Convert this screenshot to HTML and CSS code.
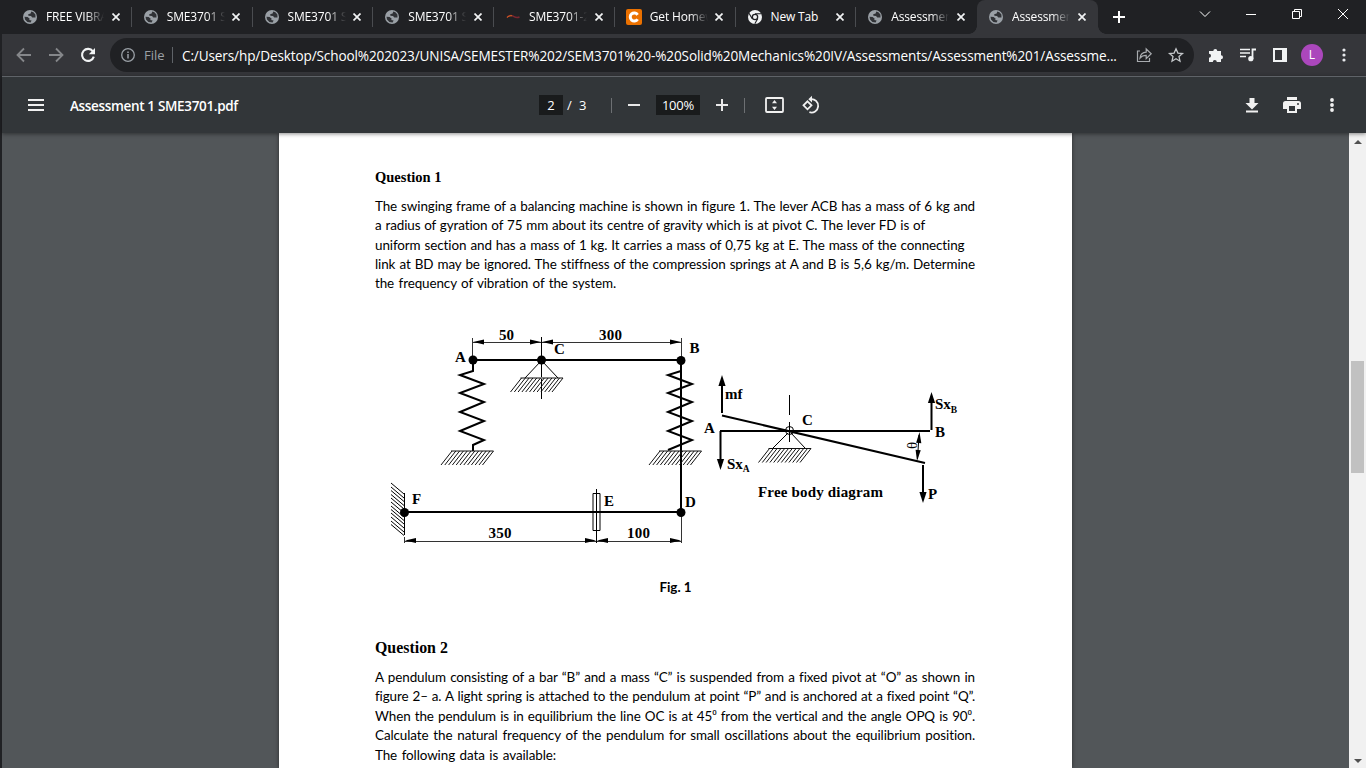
FILE: index.html
```
<!DOCTYPE html>
<html lang="en">
<head>
<meta charset="utf-8">
<title>Assessment 1 SME3701.pdf</title>
<link rel="stylesheet" href="styles.css">
</head>
<body>
<svg class="defs">
<defs>
<symbol id="globe" viewBox="0 0 14 14"><circle cx="7" cy="7" r="7" fill="#9aa0a6"/><path d="M8.3 1.5L7.6 3.6 5.2 4.2 5.4 5.8 8 6.1 9.3 7.6 12.5 7.4 12.4 4.6 10.4 2.2zM1.5 6.8L4.6 7 6.7 8.8 6.2 10 8.6 10.4 7.6 12.5 4.4 11.9 2 9.5z" fill="#303236"/></symbol>
<symbol id="x" viewBox="0 0 8 8"><path d="M.5.5l7 7M7.5.5l-7 7" stroke="#f1f3f4" stroke-width="1.7"/></symbol>
<g id="hatch" stroke="#111" stroke-width="1"><path d="M0 0H42.5M1 0l-11 14M4.8 0l-11 14M8.6 0l-11 14M12.4 0l-11 14M16.2 0l-11 14M20 0l-11 14M23.8 0l-11 14M27.6 0l-11 14M31.4 0l-11 14M35.2 0l-11 14M39 0l-11 14M42.5 0l-11 14"/></g>
<path id="head" d="M0 0L-11 -2.6V2.6z"/>
<path id="bighead" d="M0 0L-3.6 11H3.6z"/>
</defs>
</svg>

<div class="tabstrip">
<div class="tab"><svg class="fav"><use href="#globe"/></svg><span class="name">FREE VIBRATION</span><svg class="close"><use href="#x"/></svg></div>
<div class="tab"><svg class="fav"><use href="#globe"/></svg><span class="name">SME3701 Solid</span><svg class="close"><use href="#x"/></svg></div>
<div class="tab"><svg class="fav"><use href="#globe"/></svg><span class="name">SME3701 Solid</span><svg class="close"><use href="#x"/></svg></div>
<div class="tab"><svg class="fav"><use href="#globe"/></svg><span class="name">SME3701 Solid</span><svg class="close"><use href="#x"/></svg></div>
<div class="tab"><svg class="fav" viewBox="0 0 14 14"><path d="M1 7.5C3 5 6 5.400 8 6.600S12 7.600 13.500 7" fill="none" stroke="#7a2630" stroke-width="1.4"/><path d="M1 7.500C2.500 5.800 4 5.400 6 5.800" fill="none" stroke="#d8641e" stroke-width="1.1"/></svg><span class="name">SME3701-23</span><svg class="close"><use href="#x"/></svg></div>
<div class="tab"><svg class="fav wide" viewBox="0 0 16 16"><rect width="16" height="16" rx="2" fill="#eb7100"/><path d="M11.600 5.800A4 4 0 1 0 11.600 10.200" fill="none" stroke="#fff" stroke-width="3"/></svg><span class="name">Get Homework</span><svg class="close"><use href="#x"/></svg></div>
<div class="tab"><svg class="fav" viewBox="0 0 14 14"><circle cx="7" cy="7" r="7" fill="#f1f3f4"/><path d="M7 3.8H13.3M4.2 8.6L1 3.2M9.8 8.6L6.8 13.8" stroke="#202124" stroke-width="1.1"/><circle cx="7" cy="7" r="3.3" fill="#202124"/><circle cx="7" cy="7" r="2" fill="#f1f3f4"/></svg><span class="name short">New Tab</span><svg class="close"><use href="#x"/></svg></div>
<div class="tab last"><svg class="fav"><use href="#globe"/></svg><span class="name">Assessment 1</span><svg class="close"><use href="#x"/></svg></div>
<div class="tab active"><svg class="fav"><use href="#globe"/></svg><span class="name">Assessment 1</span><svg class="close"><use href="#x"/></svg></div>
<svg class="newtab" viewBox="0 0 12 12"><path d="M6 0v12M0 6h12" stroke="#fff" stroke-width="2"/></svg>
<div class="winbtns">
<svg viewBox="0 0 46 28"><path d="M18 11.5l5 5 5-5"/></svg>
<svg viewBox="0 0 46 28"><path d="M18 14.5h10"/></svg>
<svg viewBox="0 0 46 28"><path d="M18.5 11.5h7v7h-7zM20.5 11.5v-2h7v7h-2"/></svg>
<svg viewBox="0 0 46 28"><path d="M18 9l10 10M28 9L18 19"/></svg>
</div>
</div>

<div class="window">
<div class="toolbar">
<svg class="tool" viewBox="0 0 32 32"><path d="M23 16H10M16 9.5L9.5 16l6.5 6.5" fill="none" stroke="#85878a" stroke-width="1.8"/></svg>
<svg class="tool" viewBox="0 0 32 32"><path d="M9 16h13M16 9.5l6.5 6.5-6.5 6.5" fill="none" stroke="#85878a" stroke-width="1.8"/></svg>
<svg class="tool" viewBox="0 0 32 32"><path d="M20.900 12.300A6 6 0 1 0 21.800 17.600" fill="none" stroke="#f1f3f4" stroke-width="2.100"/><path d="M23 9v6.200h-6.200z" fill="#f1f3f4"/></svg>
<div class="omnibox">
<svg class="info" viewBox="0 0 14 14"><circle cx="7" cy="7" r="6.3" fill="none" stroke="#9aa0a6" stroke-width="1.3"/><path d="M7 6v4.500M7 3.500v1.400" stroke="#9aa0a6" stroke-width="1.500"/></svg>
<span class="scheme">File</span>
<span class="url">C:/Users/hp/Desktop/School%202023/UNISA/SEMESTER%202/SEM3701%20-%20Solid%20Mechanics%20IV/Assessments/Assessment%201/Assessme...</span>
<svg class="tool" viewBox="0 0 32 32"><path d="M12 12H9.500v10.500h12V19" fill="none" stroke="#a8abaf" stroke-width="1.200"/><path d="M12 19c.5-4 3-5.700 6.200-5.800V10l5 4.800-5 4.800v-3.200c-2.800 0-4.600.7-6.200 2.600z" fill="none" stroke="#a8abaf" stroke-width="1.200"/></svg>
<svg class="tool" viewBox="0 0 32 32"><path d="M16 9.800l1.900 4.300 4.600.4-3.500 3.100 1 4.600-4-2.400-4 2.400 1-4.600-3.500-3.100 4.600-.4z" fill="none" stroke="#c4c7ca" stroke-width="1.300"/></svg>
</div>
<svg class="tool" viewBox="0 0 32 32"><path d="M9 12h4.300a2 2 0 1 1 4 0H21v4.200a2 2 0 1 1 0 4V23h-4.200a2 2 0 0 0-4 0H9v-4.200a2 2 0 0 0 0-4z" fill="#f1f3f4"/></svg>
<svg class="tool" viewBox="0 0 32 32"><path d="M8 10.500h10M8 14h10M8 17.500h6" stroke="#f1f3f4" stroke-width="1.500"/><path d="M20.500 20V10.500H24" fill="none" stroke="#f1f3f4" stroke-width="1.800"/><circle cx="18.800" cy="19.700" r="2.600" fill="#f1f3f4"/></svg>
<svg class="tool" viewBox="0 0 32 32"><path d="M10 10h12v12H10z" fill="none" stroke="#f1f3f4" stroke-width="2"/><path d="M18 9h5v14h-5z" fill="#f1f3f4"/></svg>
<div class="avatar">L</div>
<svg class="tool" viewBox="0 0 32 32" fill="#e8eaed"><circle cx="16" cy="11" r="1.600"/><circle cx="16" cy="16" r="1.600"/><circle cx="16" cy="21" r="1.600"/></svg>
</div>

<div class="pdfbar">
<div class="pdfleft">
<svg class="menu" viewBox="0 0 16 12"><path d="M0 1h16M0 6h16M0 11h16" stroke="#f1f1f1" stroke-width="2"/></svg>
<span class="filename">Assessment 1 SME3701.pdf</span>
</div>
<div class="pdfmid">
<span class="box num">2</span><span class="total">/&nbsp; 3</span>
<span class="sep"></span>
<svg class="sign" viewBox="0 0 14 14"><path d="M1 7h12" stroke="#e8e8e8" stroke-width="2"/></svg>
<span class="box pct">100%</span>
<svg class="sign" viewBox="0 0 14 14"><path d="M1 7h12M7 1v12" stroke="#e8e8e8" stroke-width="2"/></svg>
<span class="sep"></span>
<svg class="fit" viewBox="0 0 19 16"><rect x="1" y="1" width="17" height="14" rx="1" fill="none" stroke="#f1f1f1" stroke-width="1.800"/><path d="M9.500 3L12 6.200H7zM9.500 13L12 9.800H7z" fill="#f1f1f1"/></svg>
<svg class="rotate" viewBox="0 0 20 20"><path d="M6.500 6.300L10.500 10.300 6.500 14.300 2.500 10.300z" fill="none" stroke="#f1f1f1" stroke-width="1.800"/><path d="M9.500 4.200A6.700 6.700 0 1 1 8.400 17.200" fill="none" stroke="#f1f1f1" stroke-width="1.800"/><path d="M11 .8v6.800L7.300 4.200z" fill="#f1f1f1"/></svg>
</div>
<div class="pdfright">
<svg viewBox="0 0 40 24"><path d="M17.500 5h5v5h4l-6.500 6.500-6.500-6.500h4zM14 17.500h12v2H14z" fill="#f1f1f1"/></svg>
<svg viewBox="0 0 40 24"><path d="M15 4h10v3H15zM13.500 8h13a2.500 2.500 0 0 1 2.500 2.500V16h-4v4H15v-4h-4v-5.500A2.500 2.500 0 0 1 13.500 8zM17 13v5h6v-5z" fill="#f1f1f1" fill-rule="evenodd"/><circle cx="26" cy="11" r="1" fill="#323639"/></svg>
<svg viewBox="0 0 40 24" fill="#f1f1f1"><circle cx="20" cy="7" r="1.900"/><circle cx="20" cy="12" r="1.900"/><circle cx="20" cy="17" r="1.900"/></svg>
</div>
</div>

<div class="viewer">
<div class="page">
<h2 class="q1">Question 1</h2>
<div class="para first">
<p>The swinging frame of a balancing machine is shown in figure 1. The lever ACB has a mass of 6 kg and</p>
<p class="w550">a radius of gyration of 75 mm about its centre of gravity which is at pivot C. The lever FD is of</p>
<p class="w590">uniform section and has a mass of 1 kg. It carries a mass of 0,75 kg at E. The mass of the connecting</p>
<p>link at BD may be ignored. The stiffness of the compression springs at A and B is 5,6 kg/m. Determine</p>
<p class="w241">the frequency of vibration of the system.</p>
</div>

<svg class="figure" viewBox="375 320 600 235" fill="none" stroke="#000" stroke-width="1">
<!-- balancing machine -->
<path d="M473 342.500H681M472.500 338V360M681.500 338V360M404 541.500H681M404.500 537V543M681.500 513V543" stroke="#333"/>
<path d="M541.500 337V399" stroke-dasharray="21 3 16 2"/>
<path d="M541 361L525 378M542 361L558 378"/>
<path d="M473 360H681M404 512H681M681 360V512" stroke-width="2"/>
<path d="M473 362V371L460 375 484 384 460 393 484 402 460 412 484 421 460 431 484 440 473 445V451M681 371L668 375 692 384 668 393 692 402 668 412 692 421 668 431 692 440 668 450" stroke-width="2"/>
<path d="M593 493.500h7v37h-7zM596.500 489V543"/>
<path d="M404.500 493V535M391 483l13 11M391 487l13 11M391 490.500l13 11M391 494.500l13 11M391 498l13 11M391 502l13 11M391 506l13 11M391 509.500l13 11M391 513l13 11M391 517l13 11M391 521l13 11M391 524.500l13 11"/>
<use href="#hatch" x="451" y="451"/>
<use href="#hatch" x="520.500" y="378"/>
<use href="#hatch" x="659" y="451"/>
<use href="#hatch" x="768.500" y="448.500"/>
<g fill="#000" stroke="none">
<circle cx="473" cy="360" r="4.500"/><circle cx="541.500" cy="360" r="4.500"/><circle cx="681" cy="360.500" r="4.500"/><circle cx="404.500" cy="512.500" r="4.500"/><circle cx="681" cy="512.500" r="4.500"/>
<use href="#head" transform="translate(541 342)"/><use href="#head" transform="translate(681 342)"/>
<use href="#head" transform="translate(473 342) rotate(180)"/><use href="#head" transform="translate(542 342) rotate(180)"/>
<use href="#head" transform="translate(596 540.500)"/><use href="#head" transform="translate(681 540.500)"/>
<use href="#head" transform="translate(405 540.500) rotate(180)"/><use href="#head" transform="translate(597 540.500) rotate(180)"/>
</g>
<!-- free body diagram -->
<path d="M720 431H930M722 415.500L925 463M722 413V382M720.500 431V462M931.500 430V400M923 465V495" stroke-width="2"/>
<path d="M789.500 395V415M789.500 422V442M788 433L773 448M791 433L805 448M919 435L917.500 459"/>
<circle cx="789.500" cy="430.500" r="4"/>
<g fill="#000" stroke="none">
<use href="#bighead" x="722" y="375"/><use href="#bighead" x="931.500" y="392"/>
<use href="#bighead" transform="translate(720.500 470) rotate(180)"/><use href="#bighead" transform="translate(923 503) rotate(180)"/>
<use href="#head" transform="translate(919.500 432) rotate(-86)"/><use href="#head" transform="translate(917 461) rotate(96)"/>
</g>
<g class="labels">
<text x="499" y="340">50</text><text x="599" y="340" textLength="23">300</text>
<text x="455" y="362">A</text><text x="554" y="354">C</text><text x="689.500" y="353">B</text>
<text x="412" y="504">F</text><text x="604" y="506">E</text><text x="685" y="507">D</text>
<text x="488.500" y="538" textLength="23">350</text><text x="627" y="538" textLength="23">100</text>
<text x="725" y="399">mf</text><text x="704" y="433">A</text><text x="802" y="425">C</text>
<text x="727" y="469">Sx<tspan class="sub" dy="3">A</tspan></text>
<text x="935" y="409">Sx<tspan class="sub" dy="4">B</tspan></text>
<text x="935" y="437">B</text><text x="928" y="499">P</text>
<text x="758" y="497" textLength="125">Free body diagram</text>
<text class="theta" transform="translate(917 449) rotate(-90)">θ</text>
</g>
</svg>

<p class="caption">Fig. 1</p>
<h2 class="q2">Question 2</h2>
<div class="para">
<p>A pendulum consisting of a bar “B” and a mass “C” is suspended from a fixed pivot at “O” as shown in</p>
<p>figure 2– a. A light spring is attached to the pendulum at point “P” and is anchored at a fixed point “Q”.</p>
<p>When the pendulum is in equilibrium the line OC is at 45⁰ from the vertical and the angle OPQ is 90⁰.</p>
<p>Calculate the natural frequency of the pendulum for small oscillations about the equilibrium position.</p>
<p class="w181">The following data is available:</p>
</div>
</div>
<div class="scrollbar">
<svg viewBox="0 0 8 4"><path d="M0 4L4 0l4 4z"/></svg>
<div class="thumb"></div>
<svg viewBox="0 0 8 4"><path d="M0 0l4 4 4-4z"/></svg>
</div>
</div>
</div>
</body>
</html>
```
FILE: styles.css
```
*{box-sizing:border-box}
body{margin:0;width:1366px;height:768px;overflow:hidden;background:#202124;color:#fff;font-family:"Open Sans","Noto Sans",sans-serif}
svg{display:block;flex:none}
.defs{position:absolute;width:0;height:0}

/* tabs */
.tabstrip{display:flex;height:34px;padding-left:11px;background:#202124}
.tab{display:flex;align-items:center;width:120.75px;flex:none;padding-left:12px;position:relative}
.tab::after{content:"";position:absolute;right:0;top:7px;width:1px;height:20px;background:#4a4c50}
.tab.last::after,.tab.active::after{display:none}
.fav{width:14px;height:14px;margin-right:9px}
.fav.wide{width:16px;height:16px;margin:0 8px 0 -1px}
.name{width:58px;font-size:12px;letter-spacing:-.15px;line-height:16px;white-space:nowrap;overflow:hidden;-webkit-mask-image:linear-gradient(90deg,#000 68%,transparent);mask-image:linear-gradient(90deg,#000 68%,transparent)}
.name.short{-webkit-mask-image:none;mask-image:none}
.close{width:8px;height:8px;margin-left:7.500px}
.active{background:#35363a;border-radius:8px 8px 0 0}
.active::before{content:"";position:absolute;left:-8px;right:-8px;bottom:0;height:8px;background:radial-gradient(circle at 0 0,transparent 7.500px,#35363a 8px) left/8px 8px no-repeat,radial-gradient(circle at 100% 0,transparent 7.500px,#35363a 8px) right/8px 8px no-repeat}
.newtab{width:12px;height:12px;margin:11px 0 0 15.250px}
.winbtns{display:flex;margin-left:auto}
.winbtns svg{width:46px;height:28px;fill:none;stroke:#fff;stroke-width:1}

.window{height:734px;margin-left:2px;display:flex;flex-direction:column}
.toolbar{display:flex;align-items:center;height:42px;padding-left:6px;padding-right:6px;background:#35363a}
.tool{width:32px;height:32px}
.omnibox{display:flex;align-items:center;width:1084px;height:34px;margin:0 6px;padding:0 2px 0 11px;border-radius:17px;background:#202124;flex:none}
.info{width:14px;height:14px}
.scheme{width:29px;height:16px;margin-left:9px;line-height:16px;font-size:13px;color:#9aa0a6;border-right:1px solid #5f6368}
.url{flex:1;padding-left:9px;font-size:13.600px;letter-spacing:-.135px;white-space:nowrap}
.avatar{width:22px;height:22px;margin:0 5px;border-radius:50%;background:#ab47bc;font-size:12px;line-height:22px;text-align:center}

/* pdf controls */
.pdfbar{display:flex;align-items:center;justify-content:space-between;height:57px;border-top:1px solid #5f6368;background:#323639;box-shadow:0 1px 4px rgba(0,0,0,.45);position:relative;z-index:1}
.pdfleft{display:flex;align-items:center;width:537px;padding-left:26px}
.menu{width:16px;height:12px}
.filename{margin:2px 0 0 26px;font-size:13.500px;font-weight:600;letter-spacing:-.34px;white-space:nowrap}
.pdfmid{display:flex;align-items:center;flex:1;font-size:13px}
.box{height:20px;line-height:20px;text-align:center;background:#191b1c}
.num{width:24px}
.pct{width:44px;margin:0 15px;letter-spacing:-.2px}
.total{width:48px;padding-left:4px;white-space:pre;letter-spacing:.2px}
.sep{width:1px;height:15px;background:#6d7073}
.sign{width:14px;height:14px}
.sep + .sign{margin-left:15px}
.sign + .sep{margin-left:15px}
.fit{width:19px;height:16px;margin-left:20px}
.rotate{width:20px;height:20px;margin-left:17px}
.pdfright{display:flex;margin-right:14px}
.pdfright svg{width:40px;height:24px}

/* document */
.viewer{display:flex;flex:1;min-height:0;background:#525659}
.page{width:793px;margin:0 277px;padding:34px 96px 0;flex:none;overflow:hidden;background:#fff;color:#000;box-shadow:0 0 4px rgba(0,0,0,.5)}
h2{margin:0;font-family:"Liberation Serif",serif;font-weight:bold;line-height:20px}
.q1{font-size:14.500px}
.q2{margin-top:41px;font-size:15.900px}
.para{margin-top:10px;font-family:Lato,sans-serif;font-size:13.450px;line-height:19.400px}
.para.first{height:97px;line-height:19.250px}
.para p{width:600px;margin:0;white-space:nowrap;letter-spacing:-.1px;text-align-last:justify}
.para .w550{width:550px}
.para .w590{width:589.500px}
.para .w241{width:241px}
.para .w181{width:181px}
.figure{width:600px;height:235px;margin-top:26px;overflow:visible}
.labels{fill:#000;stroke:none;font:bold 15px "Liberation Serif",serif}
.sub{font-size:9.500px}
.theta{font-weight:normal}
.caption{margin:22px 0 0;font:bold 13.400px/20px Lato,sans-serif;text-align:center}
.scrollbar{display:flex;flex-direction:column;width:17px;padding:7px 2px 5px;background:#f1f1f1}
.scrollbar svg{width:8px;height:4px;margin:0 auto;fill:#505050}
.thumb{height:112px;margin:217px 0 auto;background:#c1c1c1}
```
